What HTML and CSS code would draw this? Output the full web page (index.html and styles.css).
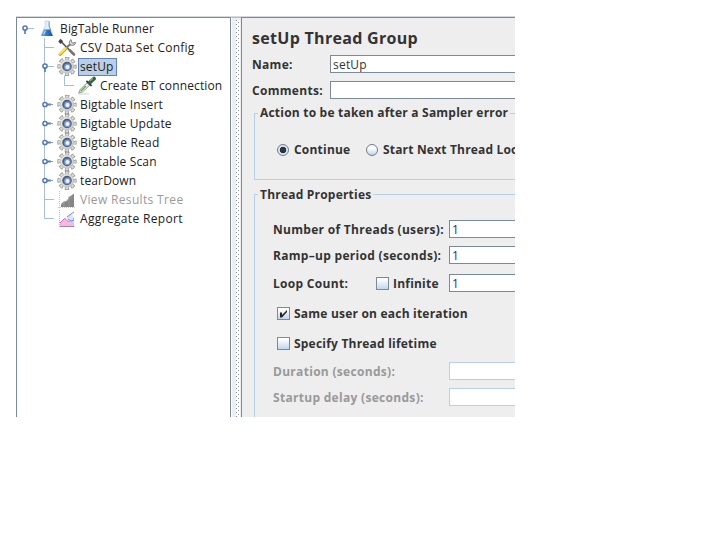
FILE: index.html
```
<!DOCTYPE html>
<html lang="en">
<head>
<meta charset="utf-8">
<title>BigTable Runner</title>
<link rel="stylesheet" href="styles.css">
</head>
<body>
<svg class="defs" aria-hidden="true">
  <defs>
    <linearGradient id="ball" x1="0" y1="0" x2="1" y2="1"><stop offset="0" stop-color="#34497a"/><stop offset="1" stop-color="#9dbcf0"/></linearGradient>
    <linearGradient id="metal" x1="0" y1="0" x2="1" y2="1"><stop offset="0" stop-color="#f0f0ee"/><stop offset="1" stop-color="#c4c4c0"/></linearGradient>
    <linearGradient id="liquid" x1="0" y1="0" x2="1" y2="0"><stop offset="0" stop-color="#5aa0e8"/><stop offset="1" stop-color="#0d4fb4"/></linearGradient>
    <symbol id="trunk" viewBox="0 0 20 19"><path d="M6.5 0V19" stroke="#a9bdd6"/></symbol>
    <symbol id="tee" viewBox="0 0 20 19"><path d="M6.5 0V19M6.5 9.5H16" stroke="#a9bdd6" fill="none"/></symbol>
    <symbol id="elbow" viewBox="0 0 20 19"><path d="M6.5 0V9.5H16" stroke="#a9bdd6" fill="none"/></symbol>
    <symbol id="closed" viewBox="0 0 20 19"><path d="M6.5 0V19" stroke="#a9bdd6"/><path d="M9 9.5H13" stroke="#5b7db5" stroke-width="2"/><path d="M12 9.5H15" stroke="#7f9bc8"/><circle cx="7" cy="9.5" r="2.1" fill="#fff" stroke="#5577b5" stroke-width="1.5"/></symbol>
    <symbol id="open" viewBox="0 0 20 19"><path d="M6.5 0V19M9 9.5H16" stroke="#a9bdd6"/><path d="M7 11V15" stroke="#5577b5" stroke-width="1.6"/><circle cx="7" cy="9" r="2.1" fill="#fff" stroke="#5577b5" stroke-width="1.5"/></symbol>
    <symbol id="rootopen" viewBox="0 0 20 19"><path d="M9 9.5H16" stroke="#a9bdd6"/><path d="M7 11V15" stroke="#5577b5" stroke-width="1.6"/><circle cx="7" cy="9" r="2.1" fill="#fff" stroke="#5577b5" stroke-width="1.5"/></symbol>
    <symbol id="gear" viewBox="0 0 20 19">
      <circle cx="10" cy="9.5" r="8" fill="none" stroke="#8f8f8b" stroke-width="3.2" stroke-dasharray="4 2.283" stroke-dashoffset="2"/>
      <circle cx="10" cy="9.5" r="7.7" fill="none" stroke="#dcdcd7" stroke-width="2.4" stroke-dasharray="2.6 3.448" stroke-dashoffset="1.3"/>
      <circle cx="10" cy="9.5" r="6.7" fill="url(#metal)" stroke="#adada8" stroke-width=".5"/>
      <circle cx="10" cy="9.5" r="4.2" fill="url(#ball)" stroke="#43557c" stroke-width="1.1"/>
      <circle cx="10.2" cy="9.7" r="2.9" fill="#7f9ed8"/><circle cx="10.5" cy="10" r="2" fill="#eef5ff"/>
    </symbol>
    <symbol id="flask" viewBox="0 0 20 19">
      <path d="M8 2H12V7L16 16.5H4L8 7Z" fill="#e2eef9" stroke="#c4d4e4" stroke-width=".8"/>
      <path d="M7 10.5H13L15.8 17H4.2Z" fill="url(#liquid)"/><path d="M12.2 2.5V7L14 12" stroke="#5b80b8" stroke-width=".8" fill="none"/><path d="M8.5 11.5L6.6 15.5" stroke="#b9dcff" stroke-width="1.2"/>
    </symbol>
    <symbol id="tools" viewBox="0 0 20 19">
      <path d="M4 3.5L15.8 15.5" stroke="#555" stroke-width="1.7"/>
      <path d="M1.2 3.6L3.6 .8L6.2 3.2L3.6 6Z" fill="#444"/><path d="M13 12.5L17 16.5" stroke="#77776f" stroke-width="2.6" stroke-linecap="round"/>
      <path d="M13.5 6L7 12" stroke="#777" stroke-width="2.2"/><path d="M9 10.5L3 16.3" stroke="#c99a20" stroke-width="3" stroke-linecap="round"/><path d="M8.6 10.3L2.9 15.8" stroke="#ffe257" stroke-width="1.9" stroke-linecap="round"/>
      <path d="M14 1.5C11.8 3.2 11.8 6.4 14 7.2C16 8 18.6 6.6 18.6 4.4L15.7 5.2L14.7 3.9Z" fill="#d5d5d5" stroke="#666" stroke-width=".8"/>
    </symbol>
    <symbol id="dropper" viewBox="0 0 20 19">
      <path d="M2 18H12" stroke="#cfcfcf"/><path d="M1.5 17.2L3 13.6L10 6.8L12.7 9.3L5.5 16Z" fill="#e6f3e2" stroke="#888" stroke-width=".8"/><path d="M3.7 15.2L9 10" stroke="#62ad50" stroke-width="1.5"/>
      <path d="M10 5.5L14 9.4" stroke="#30483a" stroke-width="2" stroke-linecap="round"/><path d="M13 6.3L17 2.6" stroke="#3a6345" stroke-width="3.8" stroke-linecap="round"/><path d="M13.2 4.9L16 2.4" stroke="#8bb18e" stroke-width="1.2"/>
    </symbol>
    <symbol id="results" viewBox="0 0 20 19"><path d="M2.5 1V18M1 17.5H18" stroke="#c8c8c8" stroke-dasharray="1 1"/><path d="M4 17V14L7 11.5L10 11L12 7L15 5L17 3.5V17Z" fill="#858585"/><path d="M7 11V17M12 6V17M4 15L16 6" stroke="#a7a7a7" stroke-width=".6"/></symbol>
    <symbol id="report" viewBox="0 0 20 19"><path d="M2.5 1V18" stroke="#bcb5bc" stroke-dasharray="1 1"/><path d="M3 17V14L8 9L12 12L17 10V17Z" fill="#f3b9e3"/><path d="M3 14L7.5 9.5L11.5 12.5L17 9" stroke="#db68bd" fill="none"/><path d="M9 11L11 7C13 3.5 16 5 16 8V11L13 12Z" fill="#dce4ff"/><path d="M10 8L14 5L17 3M11 10L14 12L17 11" stroke="#7189df" fill="none"/><path d="M3 17.5H17.5" stroke="#a48a9d"/></symbol>
  </defs>
</svg>
<div class="window">
  <div class="tree">
    <div class="row"><svg class="cell"><use href="#rootopen"/></svg><svg class="icon"><use href="#flask"/></svg><span class="label">BigTable Runner</span></div>
    <div class="row l1"><svg class="cell"><use href="#tee"/></svg><svg class="icon"><use href="#tools"/></svg><span class="label wide">CSV Data Set Config</span></div>
    <div class="row l1"><svg class="cell"><use href="#open"/></svg><svg class="icon"><use href="#gear"/></svg><span class="label selected">setUp</span></div>
    <div class="row l1"><svg class="cell"><use href="#trunk"/></svg><svg class="cell"><use href="#elbow"/></svg><svg class="icon"><use href="#dropper"/></svg><span class="label">Create BT connection</span></div>
    <div class="row l1"><svg class="cell"><use href="#closed"/></svg><svg class="icon"><use href="#gear"/></svg><span class="label">Bigtable Insert</span></div>
    <div class="row l1"><svg class="cell"><use href="#closed"/></svg><svg class="icon"><use href="#gear"/></svg><span class="label">Bigtable Update</span></div>
    <div class="row l1"><svg class="cell"><use href="#closed"/></svg><svg class="icon"><use href="#gear"/></svg><span class="label wide">Bigtable Read</span></div>
    <div class="row l1"><svg class="cell"><use href="#closed"/></svg><svg class="icon"><use href="#gear"/></svg><span class="label">Bigtable Scan</span></div>
    <div class="row l1"><svg class="cell"><use href="#closed"/></svg><svg class="icon"><use href="#gear"/></svg><span class="label">tearDown</span></div>
    <div class="row l1"><svg class="cell"><use href="#tee"/></svg><svg class="icon"><use href="#results"/></svg><span class="label wider off">View Results Tree</span></div>
    <div class="row l1"><svg class="cell"><use href="#elbow"/></svg><svg class="icon"><use href="#report"/></svg><span class="label wider">Aggregate Report</span></div>
  </div>
  <div class="divider"></div>
  <div class="panel">
    <h1>setUp Thread Group</h1>
    <div class="field top"><span class="caption">Name:</span><span class="input">setUp</span></div>
    <div class="field top second"><span class="caption">Comments:</span><span class="input"></span></div>
    <section class="group action">
      <h2>Action to be taken after a Sampler error</h2>
      <div class="choices"><span class="radio on"></span><span class="choice">Continue</span><span class="radio"></span><span class="choice next">Start Next Thread Loop</span></div>
    </section>
    <section class="group props">
      <h2>Thread Properties</h2>
      <div class="field"><span class="caption">Number of Threads (users):</span><span class="input">1</span></div>
      <div class="field ramp"><span class="caption">Ramp–up period (seconds):</span><span class="input">1</span></div>
      <div class="field loop"><span class="caption">Loop Count:</span><span class="check"></span><span class="infinite">Infinite</span><span class="input">1</span></div>
      <div class="option"><span class="check"><svg viewBox="0 0 11 11"><path d="M2 4.5H4V7L9 2V4L4 9.5H2Z" fill="#222"/></svg></span><span>Same user on each iteration</span></div>
      <div class="option life"><span class="check"></span><span>Specify Thread lifetime</span></div>
      <div class="field disabled"><span class="caption">Duration (seconds):</span><span class="input"></span></div>
      <div class="field disabled ramp"><span class="caption">Startup delay (seconds):</span><span class="input"></span></div>
    </section>
  </div>
</div>
</body>
</html>
```
FILE: styles.css
```
* { box-sizing: border-box; }
body { margin: 0; background: #fff; font: 12px/19px "Open Sans", "Noto Sans", sans-serif; color: #333; }
.defs { display: block; width: 0; height: 0; position: absolute; }
.window { display: flex; width: 499px; height: 401px; margin: 16px 0 0 16px; overflow: hidden; white-space: nowrap; border-top: 1px solid #d5dadd; background: #eee; }
.tree { flex: none; width: 215px; padding: 1px 0 0 1px; background: #fff; border: 1px solid #7a8a99; border-bottom: 0; }
.row { display: flex; height: 19px; align-items: center; }
.l1 { padding-left: 20px; }
.cell { flex: none; width: 20px; height: 19px; }
.icon { flex: none; width: 20px; height: 19px; margin-left: -1px; margin-right: 1px; }
.label { padding: 0 2px; height: 18px; line-height: 18px; letter-spacing: .14px; color: #222; }
.wide { letter-spacing: .22px; }
.wider { letter-spacing: .34px; }
.selected { background: #b8cfe5; border: 1px solid #6382bf; padding: 0 2px 0 1px; line-height: 16px; }
.off { color: #999; }
.divider { flex: none; width: 10px; padding: 2px 0 0 4px; border-left: 1px solid #fafafa; border-top: 1px solid #b4bcc3; background: #eee; }
.divider::before { content: ""; display: block; width: 4px; height: 100%; background: conic-gradient(from 0deg at 1px 1px, transparent 75%, #7f8993 0) 0 0 / 4px 4px, conic-gradient(from 0deg at 1px 1px, transparent 75%, #7f8993 0) 2px 2px / 4px 4px, #fff; }
.panel { flex: 1; min-width: 0; border-left: 1px solid #7a8a99; border-top: 1px solid #7a8a99; padding: 8px 0 0 10px; font-weight: bold; letter-spacing: .21px; overflow: hidden; }
h1 { margin: 0; height: 29px; font-size: 16px; line-height: 24px; letter-spacing: .3px; }
.field { display: flex; height: 18px; line-height: 18px; }
.caption { flex: none; width: 176px; line-height: 19px; letter-spacing: .3px; }
.top .caption { width: 78px; }
.second { margin-top: 8px; }
.input { flex: 1; height: 18px; background: #fff; border: 1px solid #7a8a99; border-right: 0; padding-left: 2px; line-height: 17px; font-weight: normal; }
.group { margin-left: 2px; border: 1px solid #b8cfe5; border-right: 0; }
h2 { width: max-content; margin: -11px 0 0 3px; padding: 0 2px; height: 19px; font-size: 12px; line-height: 19px; background: #eee; }
.action { height: 67px; margin-top: 14px; }
.choices { display: flex; align-items: center; margin: 18px 0 0 22px; height: 19px; }
.radio { flex: none; width: 12px; height: 12px; border: 1px solid #6f7d8b; border-radius: 50%; background: linear-gradient(#fff 30%, #c2d6eb); }
.on { background: radial-gradient(circle, #2c3540 0 3px, #dce7f1 3.6px); }
.choice { flex: none; width: 72px; margin-left: 5px; }
.next { width: auto; letter-spacing: .18px; }
.props { height: 300px; margin-top: 14px; padding: 0 0 0 18px; }
.props h2 { margin: -10px 0 16px -15px; }
.ramp { margin-top: 8px; }
.loop { margin-top: 10px; }
.loop .caption { width: 103px; }
.check { flex: none; width: 13px; height: 13px; border: 1px solid #7a8a99; background: linear-gradient(#fff 10%, #c2d6eb); }
.check svg { display: block; width: 11px; height: 11px; }
.loop .check { margin-top: 3px; }
.infinite { width: 56px; margin-left: 4px; line-height: 19px; }
.option { display: flex; align-items: center; gap: 4px; height: 18px; margin: 12px 0 0 4px; }
.life { margin-bottom: 10px; }
.disabled { color: #999; }
.disabled .input { border-color: #b8cfe5; }
.label.off { color: #999; }
```
